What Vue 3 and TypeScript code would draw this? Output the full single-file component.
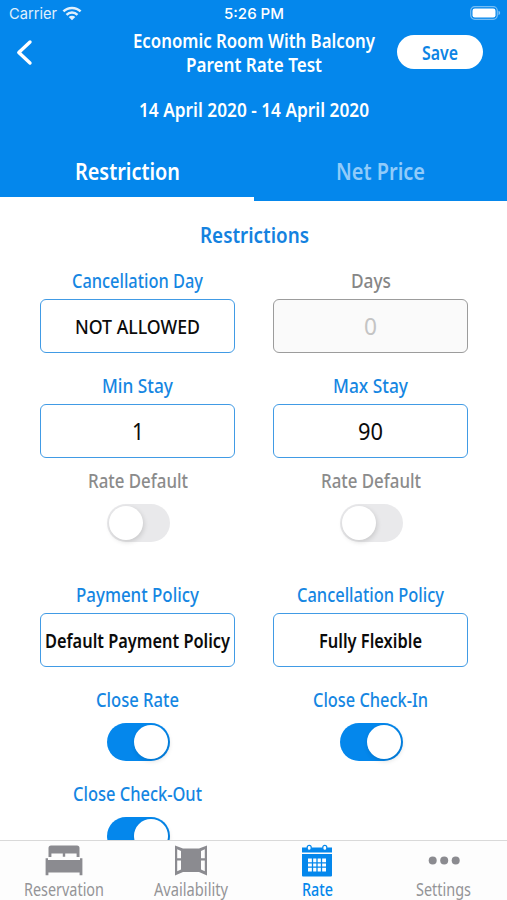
<script setup lang="ts">
import { h, ref, type FunctionalComponent } from 'vue'

interface FitProps {
  text: string
  w: number
  size?: number
  weight?: number
  family?: string
}

// Single line of condensed text, fitted to a given width around its baseline.
const Fit: FunctionalComponent<FitProps> = (p) =>
  h('svg', { class: 'fit', width: p.w, height: 24, viewBox: `0 0 ${p.w} 24` }, [
    h(
      'text',
      {
        x: 0,
        y: 18,
        textLength: p.w,
        lengthAdjust: 'spacingAndGlyphs',
        'font-size': p.size ?? 20,
        'font-weight': p.weight ?? 600,
        'font-family': p.family ?? "'Noto Sans', 'Open Sans', sans-serif",
        fill: 'currentColor',
      },
      p.text,
    ),
  ])
Fit.props = ['text', 'w', 'size', 'weight', 'family']

interface Field {
  label: string
  labelW: number
  value: string
  valueW: number
  size: number
  weight: number
  disabled?: boolean
}

const rowA: Field[] = [
  { label: 'Cancellation Day', labelW: 131, value: 'NOT ALLOWED', valueW: 125, size: 20, weight: 550 },
  { label: 'Days', labelW: 40, value: '0', valueW: 13, size: 23, weight: 400, disabled: true },
]
const rowB: Field[] = [
  { label: 'Min Stay', labelW: 71, value: '1', valueW: 12, size: 23, weight: 450 },
  { label: 'Max Stay', labelW: 75, value: '90', valueW: 25, size: 23, weight: 450 },
]
const rowC: Field[] = [
  { label: 'Payment Policy', labelW: 123, value: 'Default Payment Policy', valueW: 185, size: 20, weight: 570 },
  { label: 'Cancellation Policy', labelW: 147, value: 'Fully Flexible', valueW: 103, size: 20, weight: 570 },
]
const fieldRows = [rowA, rowB]

const rateDefaults = ref([false, false])
const closes = ref([
  { label: 'Close Rate', w: 83, on: true },
  { label: 'Close Check-In', w: 115, on: true },
  { label: 'Close Check-Out', w: 129, on: true },
])
const activeTab = ref(0)
</script>

<template>
  <div class="screen">
    <header class="header">
      <div class="status">
        <div class="carrier">
          <Fit text="Carrier" :w="48" :size="15" :weight="400" family="Inter, sans-serif" />
          <svg class="wifi" width="20" height="15" viewBox="0 0 20 15">
            <g fill="none" stroke="#fff" stroke-width="2.5">
              <path d="M1.4 5.4C6.2 .7 13.8 .7 18.6 5.4" />
              <path d="M4.5 8.8C7.6 5.8 12.4 5.8 15.5 8.8" />
            </g>
            <path d="M6.7 11C8.6 9.2 11.4 9.2 13.3 11L10 14.3Z" fill="#fff" />
          </svg>
        </div>
        <Fit class="clock" text="5:26 PM" :w="60" :size="15" :weight="500" family="Inter, sans-serif" />
        <svg class="battery" width="31" height="14" viewBox="0 0 31 14">
          <rect x=".7" y=".7" width="26.6" height="12.6" rx="4" fill="none" stroke="#fff" stroke-opacity=".45" stroke-width="1.2" />
          <rect x="2.5" y="2.4" width="23" height="9.2" rx="2.3" fill="#fff" />
          <path d="M28.5 4.8Q30.2 5.4 30.2 7T28.5 9.2Z" fill="#fff" fill-opacity=".5" />
        </svg>
      </div>
      <div class="nav">
        <button class="back" aria-label="Back">
          <svg width="18" height="28" viewBox="0 0 18 28">
            <path d="M15 3 3.8 13.5 15 24" fill="none" stroke="#fff" stroke-width="3.4" stroke-linecap="round" stroke-linejoin="round" />
          </svg>
        </button>
        <div class="title">
          <Fit text="Economic Room With Balcony" :w="242" />
          <Fit text="Parent Rate Test" :w="136" />
        </div>
        <button class="save"><Fit text="Save" :w="36" :size="20" /></button>
      </div>
      <div class="date"><Fit text="14 April 2020 - 14 April 2020" :w="230" :size="20" /></div>
      <div class="tabs">
        <button class="tab" :class="{ active: activeTab === 0 }" @click="activeTab = 0">
          <Fit text="Restriction" :w="105" :size="23" />
        </button>
        <button class="tab" :class="{ active: activeTab === 1 }" @click="activeTab = 1">
          <Fit text="Net Price" :w="89" :size="23" />
        </button>
      </div>
    </header>

    <main class="content">
      <div class="heading"><Fit text="Restrictions" :w="109" :size="22" /></div>

      <div v-for="(row, i) in fieldRows" :key="i" class="grid">
        <div v-for="f in row" :key="f.label" class="cell" :class="{ disabled: f.disabled }">
          <Fit :text="f.label" :w="f.labelW" :weight="500" />
          <div class="box" :class="{ number: f.size > 20 }">
            <Fit :text="f.value" :w="f.valueW" :size="f.size" :weight="f.weight" />
          </div>
        </div>
      </div>

      <div class="grid defaults">
        <div v-for="(on, i) in rateDefaults" :key="i" class="cell">
          <Fit text="Rate Default" :w="100" :weight="500" />
          <button class="toggle" :class="{ on }" @click="rateDefaults[i] = !on"><span class="knob"></span></button>
        </div>
      </div>

      <div class="grid policies">
        <div v-for="f in rowC" :key="f.label" class="cell">
          <Fit :text="f.label" :w="f.labelW" :weight="500" />
          <div class="box"><Fit :text="f.value" :w="f.valueW" :size="f.size" :weight="f.weight" /></div>
        </div>
      </div>

      <div class="grid closes">
        <div v-for="c in closes" :key="c.label" class="cell">
          <Fit :text="c.label" :w="c.w" :weight="500" />
          <button class="toggle" :class="{ on: c.on }" @click="c.on = !c.on"><span class="knob"></span></button>
        </div>
      </div>
    </main>

    <nav class="tabbar">
      <div class="item">
        <svg class="icon" width="38" height="32" viewBox="0 0 38 32" fill="currentColor">
          <path d="M3.5 12.5V3.5Q3.5 1 6 1H32Q34.5 1 34.5 3.5V12.5H31.6V9H20.2V12.3H17.8V9H6.4V12.5Z" />
          <path d="M.6 13.8H3V15.4H35V13.8H37.4V30.8H34.6V28H3.4V30.8H.6Z" />
        </svg>
        <Fit text="Reservation" :w="80" :size="18" :weight="400" />
      </div>
      <div class="item">
        <svg class="icon" width="34" height="32" viewBox="0 0 34 32" fill="currentColor">
          <path fill-rule="evenodd" d="M1 1 9 4H25L33 1V31L25 27.5H9L1 31ZM3.2 4.7V13.8H7V6.5ZM3.2 16V26.8L7 25V16ZM30.8 4.7 27 6.5V13.8H30.8ZM30.8 16H27V25L30.8 26.8Z" />
        </svg>
        <Fit text="Availability" :w="74" :size="18" :weight="400" />
      </div>
      <div class="item current">
        <svg class="icon" width="32" height="33" viewBox="0 0 32 33">
          <path d="M1 3.5H31V8.4H1ZM1 10H31V31.5Q31 32.5 30 32.5H2Q1 32.5 1 31.5Z" fill="currentColor" />
          <rect x="6.2" y="1.4" width="4" height="5" rx="2" fill="#fff" stroke="#0487ec" stroke-width="1.2" />
          <rect x="21.8" y="1.4" width="4" height="5" rx="2" fill="#fff" stroke="#0487ec" stroke-width="1.2" />
          <rect x="7" y="14.5" width="18" height="13" fill="#fff" />
          <path d="M11.5 14V28M16 14V28M20.5 14V28M6.5 18.8H25.5M6.5 23.2H25.5" stroke="currentColor" stroke-width="1.3" />
        </svg>
        <Fit text="Rate" :w="31" :size="18" :weight="500" />
      </div>
      <div class="item">
        <svg class="icon" width="32" height="32" viewBox="0 0 32 32" fill="currentColor">
          <circle cx="4.7" cy="16" r="4" /><circle cx="16.2" cy="16" r="4" /><circle cx="27.7" cy="16" r="4" />
        </svg>
        <Fit text="Settings" :w="55" :size="18" :weight="400" />
      </div>
    </nav>
  </div>
</template>

<style>
body {
  margin: 0;
  background: #fff;
}
.fit {
  display: block;
  flex: none;
  overflow: visible;
  font-stretch: 80%;
}
</style>

<style scoped>
.screen {
  width: 507px;
  height: 900px;
  display: flex;
  flex-direction: column;
  overflow: hidden;
  background: #fff;
  font-family: 'Noto Sans', sans-serif;
}
button {
  border: 0;
  padding: 0;
  margin: 0;
  background: none;
  color: inherit;
  cursor: pointer;
}
.header {
  flex: none;
  height: 201px;
  background: #0487ec;
  color: #fff;
  display: flex;
  flex-direction: column;
}
.status {
  height: 30px;
  display: grid;
  grid-template-columns: 1fr auto 1fr;
  align-items: start;
}
.carrier {
  display: flex;
  gap: 5px;
  padding-left: 8.5px;
  padding-top: 1px;
  opacity: 0.88;
}
.wifi {
  margin-top: 5px;
}
.clock {
  padding-top: 0.5px;
  margin-left: 1px;
}
.battery {
  justify-self: end;
  margin: 6px 6px 0 0;
}
.nav {
  height: 69px;
  display: grid;
  grid-template-columns: 110px 1fr 110px;
}
.back {
  justify-self: start;
  height: 28px;
  margin: 9px 0 0 15px;
}
.title {
  display: flex;
  flex-direction: column;
  align-items: center;
}
.save {
  justify-self: end;
  box-sizing: border-box;
  width: 86px;
  height: 34px;
  margin: 5px 24px 0 0;
  padding-top: 3px;
  border-radius: 17px;
  background: #fff;
  color: #0c84e4;
  display: flex;
  justify-content: center;
  align-items: center;
}
.date {
  height: 45px;
  display: flex;
  justify-content: center;
}
.tabs {
  flex: 1;
  display: grid;
  grid-template-columns: 254px 253px;
}
.tab {
  display: flex;
  justify-content: center;
  align-items: flex-start;
  padding-top: 18px;
  color: #90cbfa;
  border-bottom: 0 solid #fff;
}
.tab.active {
  color: #fff;
  border-bottom-width: 4px;
}
.content {
  flex: 1;
  min-height: 0;
  overflow: hidden;
  padding: 24px 39px 0 40px;
}
.heading {
  display: flex;
  justify-content: center;
  height: 45px;
  color: #1482df;
}
.grid {
  display: grid;
  grid-template-columns: 195px 195px;
  justify-content: space-between;
  row-gap: 22px;
  margin-bottom: 22px;
}
.cell {
  display: flex;
  flex-direction: column;
  align-items: center;
  color: #1586e2;
}
.box {
  box-sizing: border-box;
  width: 195px;
  height: 54px;
  margin-top: 5px;
  padding-top: 3px;
  border: 1.5px solid #419be5;
  border-radius: 6px;
  color: #0b0b0b;
  display: flex;
  justify-content: center;
  align-items: center;
}
.box.number {
  padding-top: 5px;
}
.disabled {
  color: #868686;
}
.disabled .box {
  border-color: #9c9c9c;
  background: #fafafa;
  color: #c4c4c4;
}
.defaults {
  margin-top: -10px;
  margin-bottom: 42px;
}
.defaults .cell {
  color: #8b8b8b;
}
.toggle {
  box-sizing: border-box;
  width: 63px;
  height: 38px;
  margin: 10px 0 0 2px;
  padding: 2px;
  border-radius: 19px;
  background: #e9e9eb;
  display: flex;
  align-items: center;
}
.toggle.on {
  justify-content: flex-end;
  background: #0487ec;
}
.knob {
  width: 34px;
  height: 34px;
  border-radius: 50%;
  background: #fff;
  box-shadow: 1px 2px 5px rgba(0, 0, 0, 0.14);
}
.closes {
  row-gap: 21.5px;
}
.tabbar {
  flex: none;
  box-sizing: border-box;
  height: 60px;
  padding-top: 2.5px;
  border-top: 1px solid #d9d9d9;
  background: #fdfdfd;
  display: grid;
  grid-template-columns: 128px 125px 128px 125px;
}
.item {
  display: flex;
  flex-direction: column;
  align-items: center;
  gap: 1px;
  color: #949497;
}
.icon {
  height: 33px;
  color: #8b8b90;
}
.item.current,
.item.current .icon {
  color: #0487ec;
}
</style>
